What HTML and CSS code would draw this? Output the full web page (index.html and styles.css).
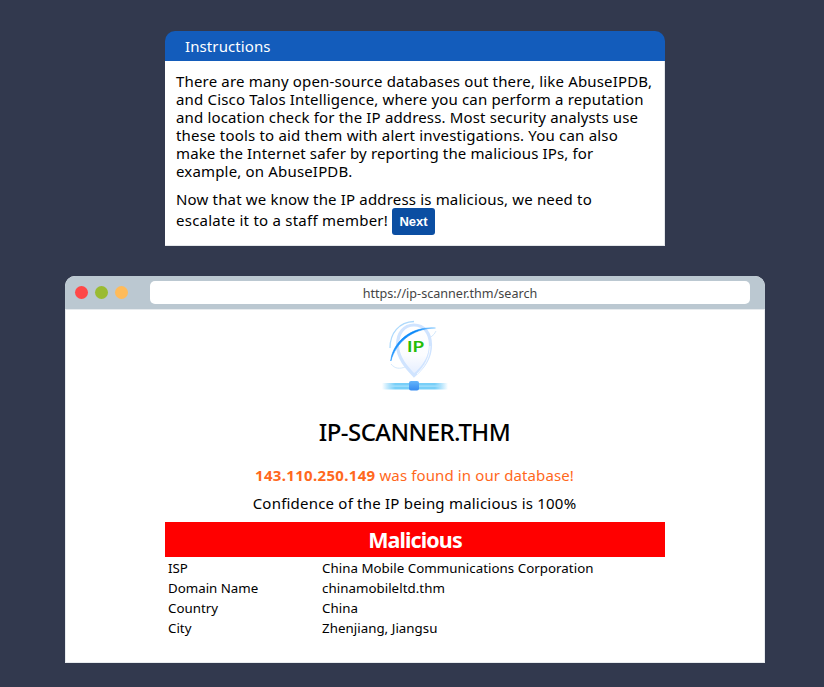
FILE: index.html
```html
<!DOCTYPE html>
<html lang="en">
<head>
<meta charset="utf-8">
<title>IP-SCANNER.THM</title>
<link rel="stylesheet" href="styles.css">
</head>
<body>
<section class="panel">
  <header class="panel-head">Instructions</header>
  <div class="panel-body">
    <p><span class="l1">There are many open-source databases out there, like AbuseIPDB,</span><br><span class="l2">and Cisco Talos Intelligence, where you can perform a reputation</span><br><span class="l3">and location check for the IP address. Most security analysts use</span><br><span class="l4">these tools to aid them with alert investigations. You can also</span><br><span class="l5">make the Internet safer by reporting the malicious IPs, for</span><br><span class="l6">example, on AbuseIPDB.</span></p>
    <p class="escalate"><span class="l7">Now that we know the IP address is malicious, we need to</span><br><span class="l8">escalate it to a staff member!</span><button class="next" type="button">Next</button></p>
  </div>
</section>
<main class="browser">
  <header class="bar">
    <i class="dot red"></i><i class="dot green"></i><i class="dot amber"></i>
    <div class="address"><span>https://ip-scanner.thm/search</span></div>
  </header>
  <div class="page">
    <svg class="logo" width="70" height="74" viewBox="0 0 70 74">
      <defs>
        <linearGradient id="pin" x1="0" y1="0" x2="0" y2="1"><stop offset="0" stop-color="#fff"/><stop offset=".6" stop-color="#fbfcff"/><stop offset="1" stop-color="#e3edff"/></linearGradient>
        <linearGradient id="arc" x1="0" y1="1" x2="1" y2="0"><stop offset="0" stop-color="#2799ff"/><stop offset=".75" stop-color="#0786f8"/><stop offset="1" stop-color="#8dceff"/></linearGradient>
        <linearGradient id="line"><stop offset="0" stop-color="#63c5fa" stop-opacity="0"/><stop offset=".2" stop-color="#78cff8"/><stop offset=".8" stop-color="#78cff8"/><stop offset="1" stop-color="#63c5fa" stop-opacity="0"/></linearGradient>
        <linearGradient id="square" x1="0" y1="0" x2="0" y2="1"><stop offset="0" stop-color="#64b5fb"/><stop offset="1" stop-color="#368bf0"/></linearGradient>
      </defs>
      <path d="M34 55.5C27 48 17.500 38 17.500 25C17.500 13 24 5 34 5S50.500 13 50.500 25C50.500 38 43 48 34 55.500Z" fill="url(#pin)" stroke="#d0e4ff" stroke-width="3.2"/>
      <path d="M37 54C45 46 50 37 50 26" fill="none" stroke="#f6faff" stroke-width="1"/>
      <path d="M10 28C10 13 19 2 34 1.500" fill="none" stroke="#add9fc" stroke-width="1.3"/>
      <path d="M11 44C15 49 20 49 25 47M51 17Q55 14 56 11" fill="none" stroke="#d5e9fc" stroke-width="1"/>
      <path d="M10.800 41C12 25 28 6 55.500 8C31 8.500 16 23 10.800 41Z" fill="url(#arc)" stroke="url(#arc)" stroke-width=".6"/>
      <text x="27" y="32" textLength="17" lengthAdjust="spacingAndGlyphs">IP</text>
      <rect x="2" y="63" width="66" height="6.5" fill="url(#line)"/>
      <rect x="10" y="65.5" width="50" height="1.2" fill="#a9e2fc"/>
      <rect x="29" y="61" width="10" height="9.5" rx="2" fill="url(#square)"/>
    </svg>
    <h1>IP-SCANNER.THM</h1>
    <div class="found"><b>143.110.250.149</b> <span>was found in our database!</span></div>
    <div class="confidence">Confidence of the IP being malicious is 100%</div>
    <div class="verdict">Malicious</div>
    <dl class="details">
      <dt>ISP</dt><dd>China Mobile Communications Corporation</dd>
      <dt>Domain Name</dt><dd>chinamobileltd.thm</dd>
      <dt>Country</dt><dd>China</dd>
      <dt>City</dt><dd>Zhenjiang, Jiangsu</dd>
    </dl>
  </div>
</main>
</body>
</html>
```
FILE: styles.css
```css
* { box-sizing: border-box; }
body {
  margin: 0;
  padding-top: 31px;
  height: 687px;
  overflow: hidden;
  background: #32394e;
  color: #000;
  font: 15px/18px "Noto Sans", sans-serif;
}
.panel { width: 500px; margin: 0 0 0 165px; }
.panel-head {
  height: 30px;
  padding-left: 20px;
  border-radius: 10px 10px 0 0;
  background: #135cbb;
  color: #fff;
  line-height: 31px;
  letter-spacing: .1px;
}
.panel-body {
  height: 185px;
  padding: 11px 0 0 11px;
  background: #fff;
  border: 1px solid #e4e7ea;
  border-top: 0;
  border-left: 0;
  white-space: nowrap;
}
.panel-body p { margin: 0 0 10px; }
.l1 { letter-spacing: .17px; }
.l2 { letter-spacing: .17px; }
.l3 { letter-spacing: .15px; }
.l4 { letter-spacing: .19px; }
.l5 { letter-spacing: .14px; }
.l6 { letter-spacing: .17px; }
.l7 { letter-spacing: .17px; }
.l8 { letter-spacing: .24px; }
.next {
  width: 43px;
  height: 27px;
  margin-left: 4px;
  padding: 0;
  border: 0;
  border-radius: 3px;
  background: #0b4ea2;
  color: #fff;
  font: bold 13px "Liberation Sans", sans-serif;
}
.browser {
  width: 700px;
  height: 387px;
  margin: 30px 0 0 65px;
  border-radius: 10px 10px 0 0;
  background: #fff;
  overflow: hidden;
}
.bar {
  display: flex;
  align-items: center;
  height: 33px;
  padding-left: 10px;
  background: #bbc8d1;
}
.dot { width: 13px; height: 13px; margin-right: 7px; border-radius: 50%; }
.red { background: #ff4848; }
.green { background: #9abb32; }
.amber { background: #ffbb5a; }
.address {
  width: 600px;
  height: 23px;
  margin-left: 15px;
  border-radius: 5px;
  background: #fff;
  color: #444;
  font-size: 12.6px;
  line-height: 25px;
  text-align: center;
}
.page {
  height: 354px;
  padding-right: 1px;
  border: 1px solid #e7ebee;
  text-align: center;
  white-space: nowrap;
}
.logo { display: block; margin: 10px 0 0 314px; }
.logo text { font: bold 16px Lato, sans-serif; fill: #26bd08; }
h1 { margin: 22px 0 0; font-size: 24px; line-height: 32px; font-weight: 500; letter-spacing: -.55px; }
.found { margin-top: 18px; color: #ff681c; }
.found b { letter-spacing: .33px; }
.found span { letter-spacing: .12px; }
.confidence { margin-top: 10px; letter-spacing: .21px; }
.verdict {
  width: 500px;
  height: 35px;
  margin: 10px 0 0 99px;
  background: #f00;
  color: #fff;
  font-size: 21.5px;
  font-weight: 700;
  line-height: 35px;
  letter-spacing: -.9px;
}
.details {
  display: grid;
  grid-template-columns: 154px 1fr;
  grid-auto-rows: 20px;
  margin: 1px 0 0 102px;
  text-align: left;
  font-size: 13.3px;
  line-height: 20px;
}
.details dd { margin: 0; letter-spacing: .04px; }
```
